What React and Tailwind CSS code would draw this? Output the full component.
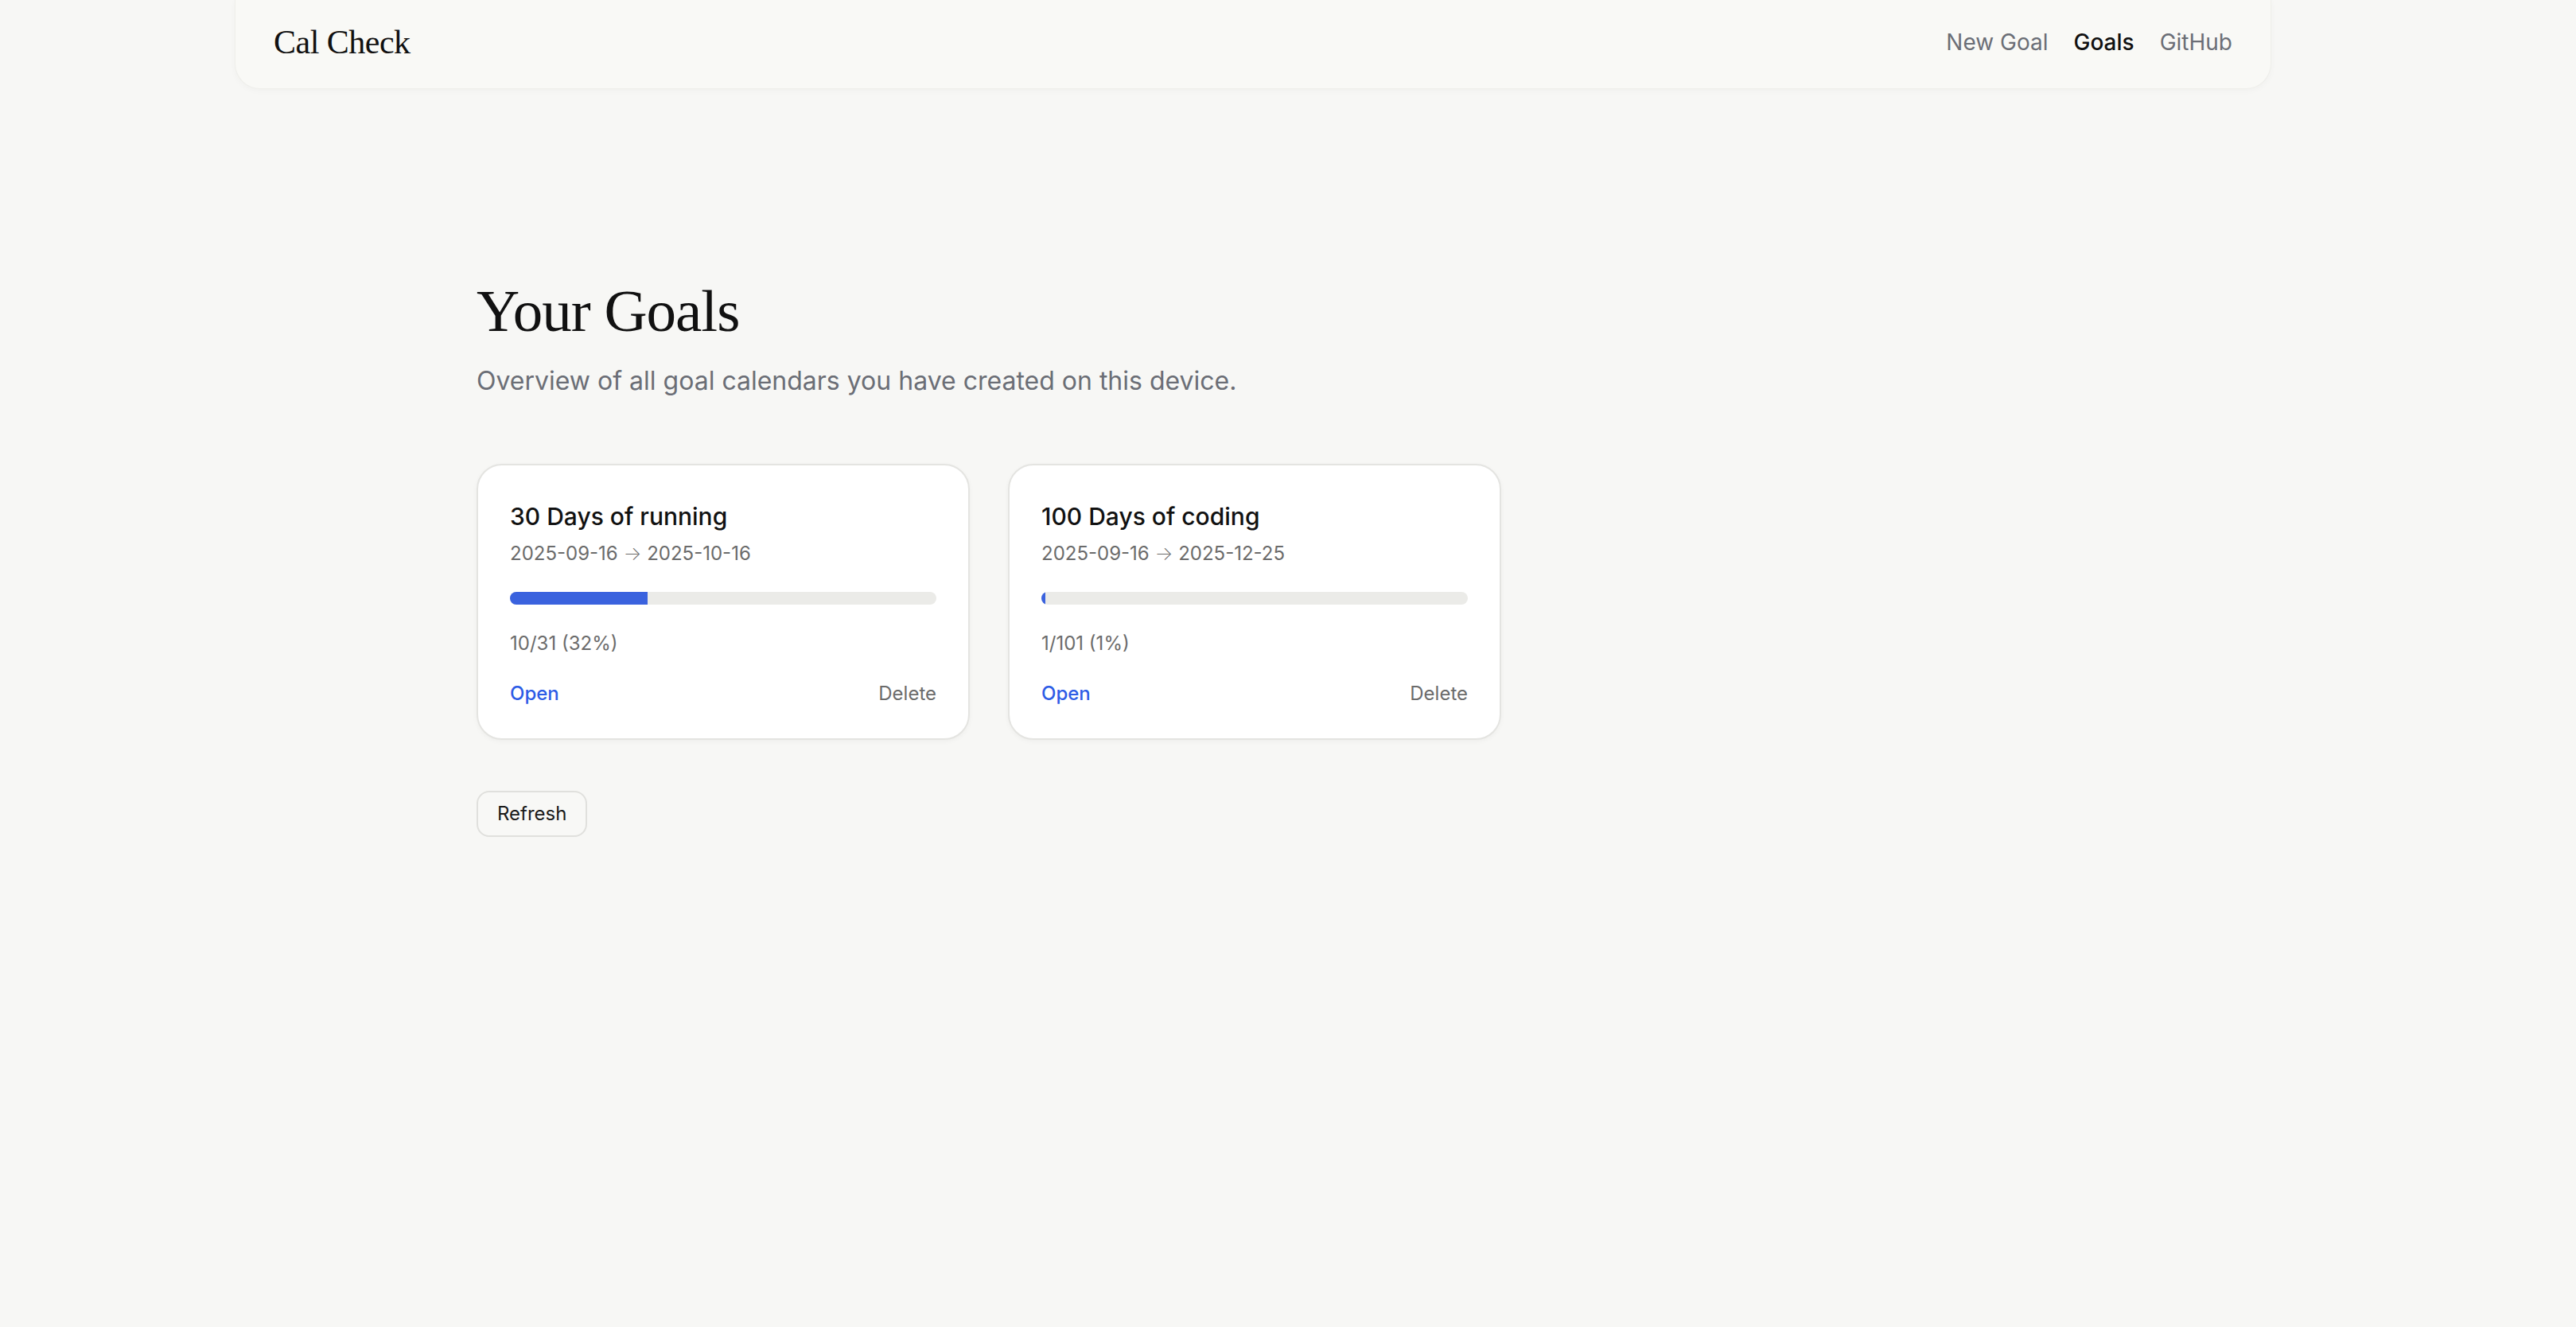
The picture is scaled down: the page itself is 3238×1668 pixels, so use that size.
const goals = [
    { id: 1, title: '30 Days of running', start: '2025-09-16', end: '2025-10-16', done: 10, total: 31 },
    { id: 2, title: '100 Days of coding', start: '2025-09-16', end: '2025-12-25', done: 1, total: 101 },
]

const serif = "font-['Liberation_Serif','Times_New_Roman',serif]"

function Header() {
    return (
        <header className="mx-auto flex h-[112px] max-w-[2560px] items-center justify-between rounded-b-[32px] border border-t-0 border-[#eeeeea] bg-[#f9f9f6] px-[48px] pb-[6px] shadow-[0_2px_8px_rgba(0,0,0,0.03)]">
            <a href="#" className={`${serif} text-[42px] leading-[52px] tracking-[-0.5px] text-[#111111]`}>
                Cal Check
            </a>
            <nav className="flex items-center gap-[32px] text-[28px] leading-[40px]">
                <a href="#" className="text-[#6b6e76]">New Goal</a>
                <a href="#" className="font-medium text-[#111111]">Goals</a>
                <a href="#" className="text-[#6b6e76]">GitHub</a>
            </nav>
        </header>
    )
}

function GoalCard({ goal }) {
    const pct = Math.round((goal.done / goal.total) * 100)
    const width = (goal.done / goal.total) * 100

    return (
        <div className="rounded-[32px] border-2 border-[#e4e4e1] bg-white p-[40px] shadow-[0_2px_6px_rgba(0,0,0,0.04)]">
            <h3 className="text-[30px] font-medium leading-[48px] text-[#111111]">{goal.title}</h3>
            <p className="mt-[7px] text-[24px] leading-[32px] text-[#6b6b6b]">
                {goal.start} <span className="font-extralight">→</span> {goal.end}
            </p>
            <div className="mt-[32px] h-[16px] w-full overflow-hidden rounded-full bg-[#ebebe8]">
                <div className="h-full bg-[#3a62de]" style={{ width: `${width}%` }} />
            </div>
            <p className="mt-[33px] text-[24px] leading-[32px] text-[#6b6b6b]">
                {goal.done}/{goal.total} ({pct}%)
            </p>
            <div className="mt-[31px] flex items-center justify-between text-[24px] leading-[32px]">
                <a href="#" className="font-medium text-[#2d5ce6]">Open</a>
                <button className="text-[#6b6b6b]">Delete</button>
            </div>
        </div>
    )
}

export default function App() {
    return (
        <div className="min-h-screen w-full bg-[#f7f7f5] font-['Inter','Noto_Sans',sans-serif]">
            <div className="w-[3150px]">
                <Header />

                <main className="mx-auto max-w-[2048px] px-[48px] pt-[238px] pb-[120px]">
                    <h1 className={`${serif} text-[75px] leading-[82px] tracking-[-1px] text-[#111111]`}>
                        Your Goals
                    </h1>
                    <p className="mt-[23px] text-[32px] leading-[48px] text-[#6b6e76]">
                        Overview of all goal calendars you have created on this device.
                    </p>

                    <div className="mt-[80px] grid grid-cols-[repeat(3,620px)] gap-[48px]">
                        {goals.map((g) => (
                            <GoalCard key={g.id} goal={g} />
                        ))}
                    </div>

                    <button className="mt-[64px] rounded-[16px] border-2 border-[#e0e0dd] bg-[#f8f8f6] px-[24px] py-[11px] text-[24px] leading-[32px] text-[#1a1a1a]">
                        Refresh
                    </button>
                </main>
            </div>
        </div>
    )
}
